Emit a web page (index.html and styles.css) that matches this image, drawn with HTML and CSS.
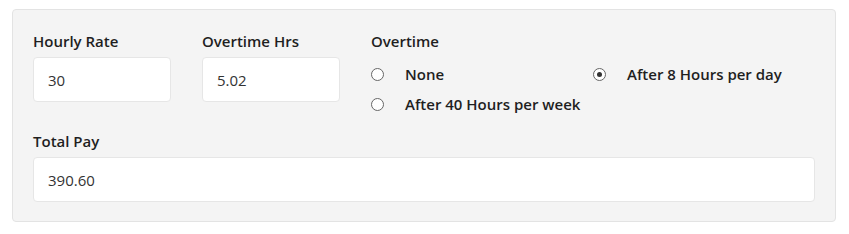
FILE: index.html
```html
<!DOCTYPE html>
<html lang="en">

<head>
    <meta charset="UTF-8">
    <meta name="viewport" content="width=device-width, initial-scale=1.0">
    <title>Overtime Pay</title>
    <link rel="stylesheet" href="styles.css">
</head>

<body>

    <div class="calc">
        <div class="top-row">
            <div class="field">
                <label for="rate">Hourly Rate</label>
                <input type="text" id="rate" value="30">
            </div>
            <div class="field">
                <label for="hours">Overtime Hrs</label>
                <input type="text" id="hours" value="5.02">
            </div>
            <div class="field">
                <label>Overtime</label>
                <div class="options">
                    <label class="option"><input type="radio" name="ot"> None</label>
                    <label class="option"><input type="radio" name="ot" checked> After 8 Hours per day</label>
                    <label class="option"><input type="radio" name="ot"> After 40 Hours per week</label>
                </div>
            </div>
        </div>
        <div class="field total">
            <label for="total">Total Pay</label>
            <input type="text" id="total" value="390.60">
        </div>
    </div>

</body>

</html>
```

FILE: styles.css
```css
body {
    font-family: "Open Sans", sans-serif;
    margin: 0;
    padding: 9px 12px;
    color: #1f1f1f;
    background: #fff;
}

/* Panel */
.calc {
    width: 782px;
    background: #f4f4f4;
    border: 1px solid #e3e3e3;
    border-radius: 4px;
    padding: 20px 20px 19px 20px;
}

.top-row {
    display: grid;
    grid-template-columns: 138px 138px 444px;
    column-gap: 31px;
    margin-bottom: 11px;
}

.field > label {
    display: block;
    font-size: 15px;
    font-weight: 600;
    line-height: 23px;
    margin-bottom: 4px;
}

input[type="text"] {
    box-sizing: border-box;
    width: 100%;
    height: 45px;
    padding: 0 14px;
    border: 1px solid #e6e6e6;
    border-radius: 4px;
    background: #fff;
    font-family: inherit;
    font-size: 15px;
    color: #333;
    outline: none;
}

.options {
    display: grid;
    grid-template-columns: 222px 222px;
    margin-top: 6px;
}

.option {
    display: flex;
    align-items: center;
    height: 30px;
    font-size: 15px;
    font-weight: 600;
}

input[type="radio"] {
    appearance: none;
    width: 13px;
    height: 13px;
    margin: 0 21px 0 0;
    border: 1px solid #666;
    border-radius: 50%;
    background: #fff;
    display: grid;
    place-items: center;
}

input[type="radio"]:checked::after {
    content: "";
    width: 5px;
    height: 5px;
    border-radius: 50%;
    background: #333;
}
```
